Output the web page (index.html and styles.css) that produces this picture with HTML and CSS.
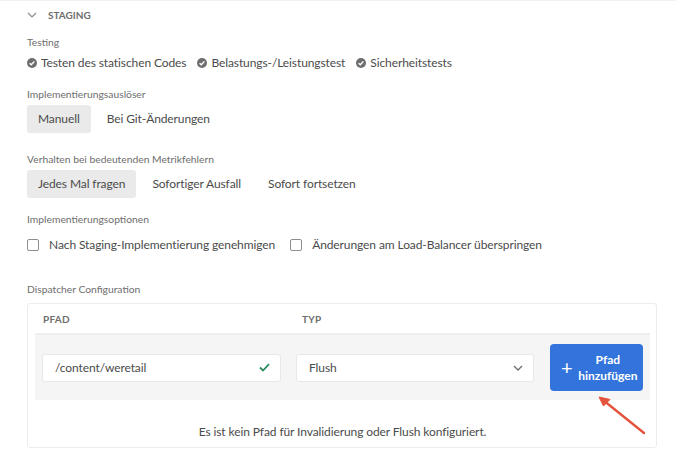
FILE: index.html
```html
<!DOCTYPE html>
<html lang="de">
<head>
<meta charset="utf-8">
<link rel="stylesheet" href="styles.css">
</head>
<body>
<div class="page">
  <div class="section-head">
    <svg class="chev" width="10" height="6" viewBox="0 0 10 6"><path d="M1 1 L5 5 L9 1" fill="none" stroke="#8a8a8a" stroke-width="1.2"/></svg>
    <span class="section-title">STAGING</span>
  </div>

  <div class="label l-testing">Testing</div>
  <div class="checks">
    <span class="check-item"><svg class="ok" width="10" height="10" viewBox="0 0 10 10"><circle cx="5" cy="5" r="5" fill="#6e6e6e"/><path d="M2.6 5.2 L4.3 6.8 L7.4 3.4" fill="none" stroke="#fff" stroke-width="1.4"/></svg>Testen des statischen Codes</span>
    <span class="check-item"><svg class="ok" width="10" height="10" viewBox="0 0 10 10"><circle cx="5" cy="5" r="5" fill="#6e6e6e"/><path d="M2.6 5.2 L4.3 6.8 L7.4 3.4" fill="none" stroke="#fff" stroke-width="1.4"/></svg>Belastungs-/Leistungstest</span>
    <span class="check-item"><svg class="ok" width="10" height="10" viewBox="0 0 10 10"><circle cx="5" cy="5" r="5" fill="#6e6e6e"/><path d="M2.6 5.2 L4.3 6.8 L7.4 3.4" fill="none" stroke="#fff" stroke-width="1.4"/></svg>Sicherheitstests</span>
  </div>

  <div class="label l-trigger">Implementierungsauslöser</div>
  <div class="segments s-trigger">
    <span class="seg selected">Manuell</span>
    <span class="seg">Bei Git-Änderungen</span>
  </div>

  <div class="label l-metric">Verhalten bei bedeutenden Metrikfehlern</div>
  <div class="segments s-metric">
    <span class="seg selected">Jedes Mal fragen</span>
    <span class="seg">Sofortiger Ausfall</span>
    <span class="seg">Sofort fortsetzen</span>
  </div>

  <div class="label l-options">Implementierungsoptionen</div>
  <div class="options">
    <label class="opt"><span class="box"></span>Nach Staging-Implementierung genehmigen</label>
    <label class="opt"><span class="box"></span>Änderungen am Load-Balancer überspringen</label>
  </div>

  <div class="label l-dispatch">Dispatcher Configuration</div>
  <div class="card">
    <div class="grid head">
      <span class="th th-path">PFAD</span>
      <span class="th th-type">TYP</span>
      <span></span>
    </div>
    <div class="grid row">
      <div class="field">
        <span>/content/weretail</span>
        <svg width="11" height="9" viewBox="0 0 11 9"><path d="M1 4.5 L4 7.5 L10 1.2" fill="none" stroke="#2d8a5f" stroke-width="1.8"/></svg>
      </div>
      <div class="field">
        <span>Flush</span>
        <svg width="10" height="6" viewBox="0 0 10 6"><path d="M1 1 L5 5 L9 1" fill="none" stroke="#6e6e6e" stroke-width="1.3"/></svg>
      </div>
      <button class="add"><span class="plus">+</span><span class="add-text">Pfad<br>hinzufügen</span></button>
    </div>
    <div class="empty">Es ist kein Pfad für Invalidierung oder Flush konfiguriert.</div>
    <svg class="arrow" width="60" height="50" viewBox="0 0 60 50"><path d="M50 43 L9 10" stroke="#e4533c" stroke-width="2.4" fill="none" stroke-linecap="round"/><path d="M5 7 L16 9.5 L9.5 16 Z" fill="#e4533c" stroke="#e4533c" stroke-width="1" stroke-linejoin="round"/></svg>
  </div>
</div>
</body>
</html>
```
FILE: styles.css
```css
* { box-sizing: border-box; }
html, body { margin: 0; padding: 0; background: #fff; }
body {
  font-family: "Lato", "Noto Sans", sans-serif;
  color: #4b4b4b;
  font-size: 12px;
  letter-spacing: -0.1px;
  border-top: 1px solid #f1f1f1;
}
.page { padding: 0 19px 0 27px; }
.section-head {
  height: 27px;
  display: flex;
  align-items: center;
}
.chev { margin-right: 11px; }
.section-title {
  font-size: 10px;
  font-weight: 700;
  color: #6e6e6e;
  letter-spacing: 0;
}
.label {
  font-size: 10.3px;
  line-height: 16px;
  color: #6e6e6e;
  letter-spacing: 0;
}
.l-testing { margin-top: 6px; }
.l-trigger { margin-top: 14px; }
.l-metric { margin-top: 18px; }
.l-options { margin-top: 13px; }
.l-dispatch { margin-top: 27px; }

.checks {
  margin-top: 4px;
  display: flex;
  gap: 11px;
  line-height: 18px;
}
.check-item { display: flex; align-items: center; gap: 4px; }

.segments { margin-top: 3px; display: flex; gap: 5px; }
.seg {
  height: 28px;
  line-height: 28px;
  padding: 0 11px;
  border-radius: 3px;
}
.seg.selected { background: #eaeaea; }

.options {
  margin-top: 9px;
  display: flex;
  gap: 15px;
  line-height: 18px;
}
.opt { display: flex; align-items: center; gap: 10px; }
.box {
  width: 12px; height: 12px;
  border: 1.5px solid #8e8e8e;
  border-radius: 2px;
}

.card {
  position: relative;
  margin-top: 6px;
  width: 630px;
  border: 1px solid #ececec;
  border-radius: 3px;
  padding: 0 6px 0 7px;
}
.grid {
  display: grid;
  grid-template-columns: 239px 238px 93px;
  column-gap: 15px;
}
.head { height: 29px; align-items: center; padding: 0 7px; }
.th {
  font-size: 10px;
  font-weight: 700;
  color: #6e6e6e;
  letter-spacing: 0.3px;
}
.th-path { padding-left: 1px; }
.th-type { padding-left: 6px; }
.row {
  height: 67px;
  background: #f5f5f5;
  border-top: 2px solid #eeeeee;
  align-items: center;
  padding: 0 7px;
}
.field {
  height: 28px;
  background: #fff;
  border: 1px solid #e8e8e8;
  border-radius: 3px;
  display: flex;
  align-items: center;
  justify-content: space-between;
  padding: 0 10px 0 12px;
}
.add {
  height: 47px;
  width: 93px;
  margin-left: 1px;
  background: #3274dc;
  border: none;
  border-radius: 4px;
  color: #fff;
  display: flex;
  align-items: center;
  padding: 0 0 0 11px;
  font-family: inherit;
}
.plus { font-size: 20px; font-weight: 400; line-height: 1; margin-top: -2px; }
.add-text {
  flex: 1;
  text-align: center;
  font-size: 12px;
  font-weight: 700;
  line-height: 16px;
  letter-spacing: 0;
}
.empty {
  text-align: center;
  line-height: 18px;
  padding: 23px 0 6px;
}
.arrow {
  position: absolute;
  left: 566px;
  top: 86px;
}
```
